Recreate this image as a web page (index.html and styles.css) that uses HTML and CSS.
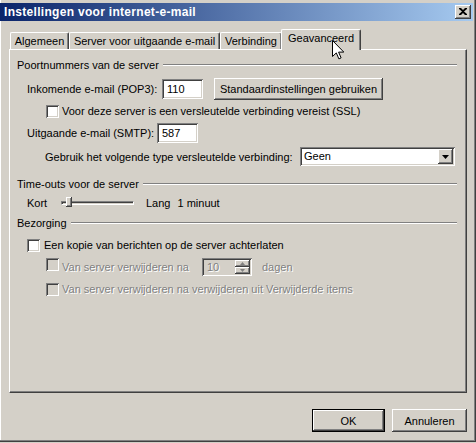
FILE: index.html
```html
<!DOCTYPE html>
<html>
<head>
<meta charset="utf-8">
<link rel="stylesheet" href="styles.css">
</head>
<body>
<div class="window">
  <div class="titlebar">
    <span class="title">Instellingen voor internet-e-mail</span>
    <span class="close"><svg width="8" height="7" viewBox="0 0 8 7"><path d="M0 0h2l2 2 2-2h2v1L5 3.5 8 6v1H6L4 5 2 7H0V6l3-2.5L0 1z" fill="#000"/></svg></span>
  </div>
  <div class="body">
    <div class="tabs">
      <div class="tab t1">Algemeen</div>
      <div class="tab t2">Server voor uitgaande e-mail</div>
      <div class="tab t3">Verbinding</div>
      <div class="tab active t4">Geavanceerd</div>
    </div>
    <div class="panel">
      <div class="group g1"><span>Poortnummers van de server</span><i class="etch"></i></div>
      <div class="row r2">
        <span class="lbl w135">Inkomende e-mail (POP3):</span>
        <span class="tb">110</span>
        <span class="btn std">Standaardinstellingen gebruiken</span>
      </div>
      <div class="row r3 ind2">
        <span class="cb"></span><span class="cbtext">Voor deze server is een versleutelde verbinding vereist (SSL)</span>
      </div>
      <div class="row r4">
        <span class="lbl w130">Uitgaande e-mail (SMTP):</span>
        <span class="tb">587</span>
      </div>
      <div class="row r5 ind3">
        <span class="lbl w255">Gebruik het volgende type versleutelde verbinding:</span>
        <span class="sel"><span class="selval">Geen</span><span class="selbtn"><svg width="7" height="4" viewBox="0 0 7 4"><path d="M0 0h7L3.5 4z" fill="#000"/></svg></span></span>
      </div>
      <div class="group g2"><span>Time-outs voor de server</span><i class="etch"></i></div>
      <div class="row r7">
        <span class="lbl w34">Kort</span>
        <span class="slider"><span class="thumb"></span></span>
        <span class="lang">Lang</span>
        <span>1 minuut</span>
      </div>
      <div class="group g3"><span>Bezorging</span><i class="etch"></i></div>
      <div class="row r9">
        <span class="cb"></span><span class="cbtext2">Een kopie van berichten op de server achterlaten</span>
      </div>
      <div class="row r10 ind2">
        <span class="cb dis top"></span><span class="cbtext dtext w140">Van server verwijderen na</span>
        <span class="spin"><span class="spinval">10</span><span class="spinbtns"><span class="sb"><svg width="5" height="3" viewBox="0 0 5 3"><path d="M0 3h5L2.5 0z" fill="#808080"/></svg></span><span class="sb"><svg width="5" height="3" viewBox="0 0 5 3"><path d="M0 0h5L2.5 3z" fill="#808080"/></svg></span></span></span>
        <span class="dtext dagen">dagen</span>
      </div>
      <div class="row r11 ind2">
        <span class="cb dis"></span><span class="cbtext dtext">Van server verwijderen na verwijderen uit Verwijderde items</span>
      </div>
    </div>
    <div class="buttons">
      <span class="btn default">OK</span>
      <span class="btn cancel">Annuleren</span>
    </div>
  </div>
  <svg class="cursor" width="12" height="20" viewBox="0 0 12 20"><path d="M0.5 0.5v16l3.8-3.6 2.6 6 2.2-1-2.5-5.8h5.2z" fill="#fff" stroke="#000" stroke-width="1"/></svg>
</div>
</body>
</html>
```
FILE: styles.css
```css
html, body {
  margin: 0;
  padding: 0;
  background: #d4d0c8;
}
body {
  width: 476px;
  height: 443px;
  overflow: hidden;
  font-family: "Liberation Sans", Arial, sans-serif;
  font-size: 11px;
  color: #000;
}
.window {
  position: relative;
  width: 476px;
  height: 442px;
  box-sizing: border-box;
  padding: 3px 2px 0 1px;
  border-right: 1px solid #404040;
  border-bottom: 1px solid #404040;
  box-shadow: inset -1px -1px 0 #808080, inset 1px 0 0 #fff;
  background: #d4d0c8;
}
.titlebar {
  height: 18px;
  margin-left: -1px;
  background: linear-gradient(to right, #0a246a, #a6caf0);
  display: flex;
  align-items: center;
  justify-content: space-between;
  padding: 0 2px 0 4px;
}
.title {
  color: #fff;
  font-weight: bold;
  font-size: 12px;
  letter-spacing: 0.3px;
}
.close {
  width: 16px;
  height: 14px;
  box-sizing: border-box;
  background: #d4d0c8;
  box-shadow: inset -1px -1px 0 #404040, inset 1px 1px 0 #fff, inset -2px -2px 0 #808080;
  display: flex;
  align-items: center;
  justify-content: center;
  padding-bottom: 1px;
}
.body {
  padding: 0 0 0 8px;
}
.tabs {
  display: flex;
  align-items: flex-end;
  height: 20px;
  margin-top: 8px;
  padding-left: 1px;
}
.tab {
  height: 17px;
  box-sizing: border-box;
  border-top: 1px solid #fff;
  border-left: 1px solid #fff;
  border-right: 1px solid #404040;
  box-shadow: inset -1px 0 0 #808080;
  border-radius: 2px 2px 0 0;
  text-align: center;
  line-height: 16px;
  white-space: nowrap;
}
.t1 { width: 59px; }
.t2 { width: 151px; }
.t3 { width: 62px; }
.tab.active {
  position: relative;
  z-index: 1;
  width: 80px;
  height: 21px;
  margin-bottom: -1px;
  margin-left: -1px;
  background: #d4d0c8;
  line-height: 17px;
}
.panel {
  height: 344px;
  width: 458px;
  box-sizing: border-box;
  border-top: 1px solid #fff;
  border-left: 1px solid #fff;
  border-right: 1px solid #404040;
  border-bottom: 1px solid #404040;
  box-shadow: inset -1px -1px 0 #808080;
  padding: 0 9px 0 7px;
  display: flex;
  flex-direction: column;
}
.group {
  display: flex;
  align-items: center;
  height: 16px;
}
.etch {
  flex: 1;
  height: 0;
  margin-left: 4px;
  border-top: 1px solid #808080;
  border-bottom: 1px solid #fff;
}
.g1 { margin-top: 7px; }
.g2 { margin-top: 10px; }
.g3 { margin-top: 4px; }
.row {
  display: flex;
  align-items: center;
  padding-left: 10px;
  white-space: nowrap;
}
.ind2 { padding-left: 29px; }
.ind3 { padding-left: 28px; }
.r2 { height: 20px; margin-top: 6px; }
.r3 { height: 14px; margin-top: 5px; }
.r4 { height: 20px; margin-top: 5px; }
.r5 { height: 19px; margin-top: 4px; }
.r7 { height: 16px; margin-top: 3px; }
.r9 { height: 14px; margin-top: 7px; }
.r10 { height: 18px; margin-top: 6px; }
.r11 { height: 14px; margin-top: 6px; }
.lbl { flex: none; }
.w135 { width: 135px; }
.w130 { width: 130px; }
.w255 { width: 255px; }
.w34 { width: 34px; }
.w140 { width: 140px; }
.tb {
  width: 41px;
  height: 20px;
  box-sizing: border-box;
  background: #fff;
  box-shadow: inset 1px 1px 0 #808080, inset -1px -1px 0 #fff, inset 2px 2px 0 #404040, inset -2px -2px 0 #d4d0c8;
  padding-left: 5px;
  line-height: 20px;
}
.btn {
  height: 22px;
  box-sizing: border-box;
  display: flex;
  align-items: center;
  justify-content: center;
  background: #d4d0c8;
  box-shadow: inset -1px -1px 0 #404040, inset 1px 1px 0 #fff, inset -2px -2px 0 #808080;
}
.std {
  width: 169px;
  margin-left: 11px;
}
.cb {
  flex: none;
  width: 13px;
  height: 13px;
  box-sizing: border-box;
  background: #fff;
  box-shadow: inset 1px 1px 0 #808080, inset -1px -1px 0 #fff, inset 2px 2px 0 #404040, inset -2px -2px 0 #d4d0c8;
}
.cb.dis { background: #d4d0c8; }
.cb.top { align-self: flex-start; }
.cbtext { margin-left: 3px; }
.cbtext2 { margin-left: 4px; }
.dtext {
  color: #808080;
  text-shadow: 1px 1px 0 #fff;
}
.sel {
  width: 155px;
  height: 19px;
  box-sizing: border-box;
  background: #fff;
  box-shadow: inset 1px 1px 0 #808080, inset -1px -1px 0 #fff, inset 2px 2px 0 #404040, inset -2px -2px 0 #d4d0c8;
  display: flex;
  padding: 2px;
}
.selval {
  flex: 1;
  padding-left: 2px;
  line-height: 15px;
}
.selbtn {
  width: 15px;
  box-sizing: border-box;
  background: #d4d0c8;
  box-shadow: inset -1px -1px 0 #404040, inset 1px 1px 0 #fff, inset -2px -2px 0 #808080;
  display: flex;
  align-items: center;
  justify-content: center;
}
.slider {
  position: relative;
  width: 73px;
  height: 16px;
  flex: none;
}
.slider::before {
  content: "";
  position: absolute;
  left: 0;
  right: 0;
  top: 6px;
  height: 2px;
  border-top: 1px solid #808080;
  border-left: 1px solid #808080;
  border-bottom: 1px solid #fff;
  border-right: 1px solid #fff;
  box-shadow: inset 1px 1px 0 #404040;
}
.thumb {
  position: absolute;
  left: 5px;
  top: 2px;
  width: 6px;
  height: 10px;
  box-sizing: border-box;
  background: #d4d0c8;
  box-shadow: inset -1px -1px 0 #404040, inset 1px 1px 0 #fff, inset -2px -2px 0 #808080;
}
.lang {
  margin-left: 12px;
  margin-right: 7px;
}
.spin {
  width: 50px;
  height: 18px;
  box-sizing: border-box;
  background: #d4d0c8;
  box-shadow: inset 1px 1px 0 #808080, inset -1px -1px 0 #fff, inset 2px 2px 0 #404040, inset -2px -2px 0 #d4d0c8;
  display: flex;
  padding: 2px;
}
.spinval {
  flex: 1;
  color: #808080;
  text-shadow: 1px 1px 0 #fff;
  padding-left: 3px;
  line-height: 14px;
}
.spinbtns {
  width: 15px;
  display: flex;
  flex-direction: column;
}
.sb {
  flex: 1;
  background: #d4d0c8;
  box-shadow: inset -1px -1px 0 #404040, inset 1px 1px 0 #fff, inset -2px -2px 0 #808080;
  display: flex;
  align-items: center;
  justify-content: center;
}
.dagen { margin-left: 10px; }
.buttons {
  display: flex;
  justify-content: flex-end;
  gap: 7px;
  width: 458px;
  margin-top: 16px;
}
.buttons .btn { height: 23px; }
.default {
  width: 73px;
  border: 1px solid #000;
}
.cancel { width: 75px; }
.cursor {
  position: absolute;
  left: 332px;
  top: 40px;
  z-index: 5;
}
```
